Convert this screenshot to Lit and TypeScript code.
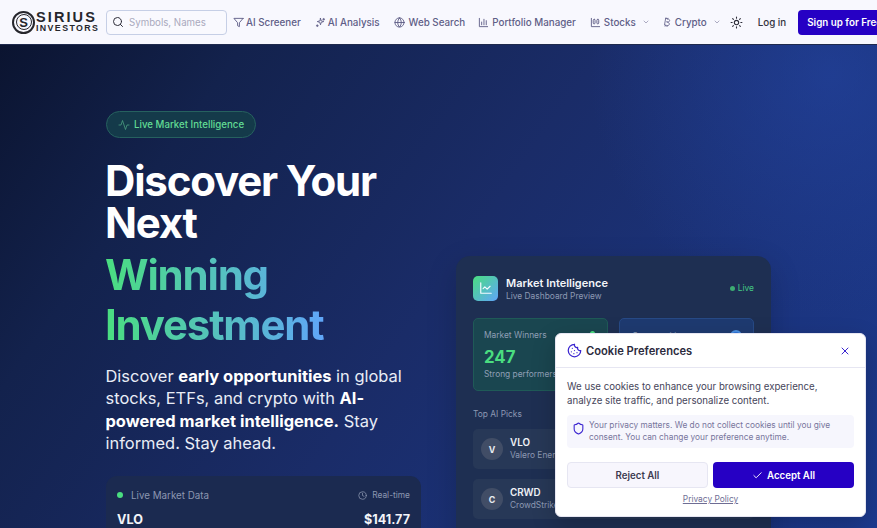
import { LitElement, html, css, svg } from "lit";
import { customElement } from "lit/decorators.js";

const ic = (content: unknown, size = 12, sw = 2) => html`<svg class="ic" width=${size} height=${size} viewBox="0 0 24 24" fill="none" stroke="currentColor" stroke-width=${sw} stroke-linecap="round" stroke-linejoin="round">${content}</svg>`;

const icons = {
  search: svg`<circle cx="11" cy="11" r="8"/><path d="m21 21-4.3-4.3"/>`,
  filter: svg`<path d="M22 3H2l8 9.46V19l4 2v-8.54L22 3z"/>`,
  spark: svg`<path d="M12 3l1.600 5.400L19 10l-5.400 1.600L12 17l-1.600-5.400L5 10l5.400-1.600z"/><path d="M19 3v4M17 5h4M5 17v4M3 19h4"/>`,
  globe: svg`<circle cx="12" cy="12" r="10"/><path d="M2 12h20"/><path d="M12 2a15 15 0 0 1 4 10 15 15 0 0 1-4 10 15 15 0 0 1-4-10 15 15 0 0 1 4-10z"/>`,
  bars: svg`<path d="M3 3v18h18"/><path d="M8 17v-6M13 17V5M18 17v-9"/>`,
  stocks: svg`<path d="M3 3v18h18"/><rect x="7" y="5" width="4" height="10" rx="2"/><rect x="15" y="5" width="4" height="10" rx="2"/>`,
  bitcoin: svg`<path d="M11.8 11.8c2.9.8 6-.3 6.5-2.6.5-2.4-1.5-4-4.3-4.7L8.8 3.2 6 19l5.4 1.3c3 .7 5.8-.4 6.3-2.9.5-2.4-2.6-4.8-5.9-5.6zM9.5 2l-.6 2M14 3l-.5 2M8 20l-.5 2M12.500 21l-.5 2"/>`,
  chev: svg`<path d="m6 9 6 6 6-6"/>`,
  sun: svg`<circle cx="12" cy="12" r="4"/><path d="M12 2v2M12 20v2M4.900 4.900l1.400 1.400M17.700 17.700l1.400 1.400M2 12h2M20 12h2M6.300 17.700l-1.400 1.400M19.100 4.900l-1.400 1.400"/>`,
  pulse: svg`<path d="M22 12h-4l-3 9L9 3l-3 9H2"/>`,
  clock: svg`<circle cx="12" cy="12" r="10"/><path d="M12 6v6l4 2"/>`,
  chart: svg`<path d="M3 3v18h18"/><path d="m19 9-5 5-4-4-3 3"/>`,
  cookie: svg`<path d="M12 2a10 10 0 1 0 10 10 4 4 0 0 1-5-5 4 4 0 0 1-5-5"/><path d="M8.500 8.500v.01M16 15.500v.01M12 12v.01M11 17v.01M7 14v.01"/>`,
  x: svg`<path d="M18 6 6 18M6 6l12 12"/>`,
  shield: svg`<path d="M20 13c0 5-3.500 7.500-7.660 8.950a1 1 0 0 1-.67-.01C7.500 20.500 4 18 4 13V6a1 1 0 0 1 1-1c2 0 4.500-1.200 6.240-2.720a1.170 1.170 0 0 1 1.520 0C14.510 3.810 17 5 19 5a1 1 0 0 1 1 1z"/>`,
  check: svg`<path d="M20 6 9 17l-5-5"/>`,
};

@customElement("app-root")
export class AppRoot extends LitElement {
  static styles = css`
    :host { display: block; position: relative; width: 877px; height: 528px; overflow: hidden; font-family: Inter, "Noto Sans", sans-serif; background: #0f1a3a; }
    .ic { display: block; flex: none; }
    nav { height: 45px; box-sizing: border-box; background: #f8f8fe; display: flex; align-items: center; padding-left: 12px; border-bottom: 1px solid #1f2a4d; white-space: nowrap; width: 920px; }
    .logo { display: flex; align-items: center; gap: 1px; width: 94px; flex: none; color: #26262c; }
    .mark { width: 23px; height: 23px; box-sizing: border-box; border: 2px solid #26262c; border-radius: 50%; padding: 1.500px; flex: none; }
    .mark span { display: flex; align-items: center; justify-content: center; width: 100%; height: 100%; box-sizing: border-box; border: 1.500px solid #26262c; border-radius: 50%; font: 700 13px "Liberation Sans", sans-serif; }
    .lw { display: flex; flex-direction: column; font-family: "Liberation Sans", sans-serif; font-weight: 700; }
    .lw b { font-size: 14.500px; line-height: 13px; letter-spacing: 2.100px; }
    .lw i { font-style: normal; font-size: 8.800px; line-height: 9px; letter-spacing: 1.400px; }
    .search { width: 121px; height: 25px; box-sizing: border-box; flex: none; border: 1px solid #c6cfe6; border-radius: 4px; display: flex; align-items: center; gap: 5px; padding-left: 5px; margin-right: 6px; color: #2e2e3a; font-size: 9.700px; background: #f9f9fe; }
    .search span { color: #a9a9bd; }
    .item { display: flex; align-items: center; gap: 3px; color: #5f5e87; font-size: 9.800px; font-weight: 500; margin-right: 14px; }
    .item.tight { gap: 2px; }
    .item.web { gap: 4px; margin-right: 13px; }
    .item.pf { margin-right: 14px; }
    .item .chev { margin-left: 3px; color: #8584a3; }
    .item.dd { margin-right: 12px; }
    .sun { color: #2e2e3a; margin: 0 15px 0 -3px; }
    .login { font-size: 9.800px; font-weight: 500; color: #33333d; margin-right: 12px; }
    .signup { height: 25px; border-radius: 4px; background: #2600c4; color: #fff; font-size: 9.800px; font-weight: 600; display: flex; align-items: center; padding: 0 9px; }

    .hero { height: 483px; box-sizing: border-box; padding: 66px 106px 0; display: grid; grid-template-columns: 315px 315px; gap: 35px; overflow: hidden;
      background: radial-gradient(circle 240px at 830px 30px, rgba(37,72,170,.5), transparent), linear-gradient(125deg, #0b1430 0%, #13224d 20%, #1a2c68 50%, #1c3a8f 100%); }
    .badge { display: inline-flex; align-items: center; gap: 4px; height: 27px; box-sizing: border-box; padding: 0 11px; border-radius: 14px; border: 1px solid #26615f; background: #143a4a; color: #62dc94; font-size: 9.700px; font-weight: 500; }
    .badge svg { color: #4ea483; }
    h1 { margin: 22px 0 0 -1px; font-size: 42px; line-height: 42px; font-weight: 700; letter-spacing: -1.200px; color: #fff; }
    .grad { display: block; line-height: 50.500px; margin-top: 5.500px; padding-right: 4px; background: linear-gradient(90deg, #4ade80, #60a5fa); -webkit-background-clip: text; background-clip: text; color: transparent; width: 218px; }
    .lead { margin: 14.500px 0 0 -0.500px; font-size: 16.450px; line-height: 22.400px; color: #e9edf6; }
    .lead b { font-weight: 700; color: #fff; }
    .market { margin-top: 21px; height: 120px; border-radius: 11px; background: #1b2a50; padding: 14px 11px; box-sizing: border-box; }
    .mh { display: flex; align-items: center; color: #8c97b0; font-size: 9.800px; }
    .mh .dot { width: 6px; height: 6px; border-radius: 50%; background: #4ade80; margin-right: 8px; }
    .mh .sp { flex: 1; }
    .mh .t { display: flex; align-items: center; gap: 5px; font-size: 8.400px; }
    .mr { display: flex; justify-content: space-between; margin-top: 11px; font-size: 12.600px; font-weight: 700; color: #f2f4f8; }

    .right { padding-top: 145px; }
    .dash { height: 300px; box-sizing: border-box; border-radius: 14px; background: #1e2f52; padding: 19px 17px 17px; box-shadow: 0 10px 30px rgba(0,0,0,.18); }
    .dh { display: flex; align-items: center; gap: 8px; height: 26px; }
    .logo2 { width: 25px; height: 25px; border-radius: 5px; background: linear-gradient(135deg, #4ade80, #60a5fa); color: #f4faff; display: flex; align-items: center; justify-content: center; }
    .dt { flex: 1; padding-top: 3px; }
    .dt b { display: block; color: #f3f5f9; font-size: 11px; line-height: 13px; font-weight: 600; }
    .dt span { display: block; color: #8d99b3; font-size: 8.400px; line-height: 13px; }
    .live { color: #43c983; font-size: 8.400px; display: flex; align-items: center; gap: 3px; }
    .live i { width: 5px; height: 5px; border-radius: 50%; background: #3dab72; }
    .stats { display: grid; grid-template-columns: 135px 135px; gap: 11px; margin-top: 17px; }
    .stat { height: 73px; box-sizing: border-box; border-radius: 5px; padding: 7px 10px; position: relative; }
    .s1 { background: #1a4650; border: 1px solid #1f5a57; }
    .s2 { background: #1e3a70; border: 1px solid #274a86; padding: 8px 12px; }
    .stat .l { color: #8f9fb5; font-size: 8.400px; line-height: 18px; }
    .stat .n { color: #4ade80; font-size: 16.800px; font-weight: 700; line-height: 22px; margin-top: 2px; }
    .stat .d { color: #8f9fb5; font-size: 8.400px; line-height: 12px; white-space: nowrap; }
    .stat .pip { position: absolute; border-radius: 50%; }
    .s1 .pip { background: #4ade80; right: 12px; top: 12px; width: 5px; height: 5px; }
    .s2 .pip { background: #2d6fd6; border: 2px solid #4a90e2; box-sizing: border-box; right: 11px; top: 11px; width: 12px; height: 12px; }
    .pl { color: #8d99b3; font-size: 8.400px; margin: 17px 0 9px; line-height: 12px; }
    .row { height: 40px; border-radius: 5px; background: #273857; display: flex; align-items: center; gap: 7px; padding-left: 8px; margin-bottom: 10px; }
    .av { width: 22px; height: 22px; border-radius: 50%; background: #414d66; color: #e8ebf1; font-size: 8.800px; font-weight: 700; display: flex; align-items: center; justify-content: center; }
    .row b { display: block; color: #eef1f6; font-size: 9.800px; line-height: 13px; font-weight: 600; }
    .row span { display: block; color: #8d99b3; font-size: 8.400px; line-height: 13px; white-space: nowrap; }

    .cookie { position: absolute; left: 555px; top: 333px; width: 311px; height: 184px; box-sizing: border-box; background: #fff; border-radius: 6px; border: 1px solid #e6e6f2; box-shadow: 0 8px 24px rgba(0,0,0,.2); color: #44435a; }
    .ch { height: 33px; border-bottom: 1px solid #e6e6f2; display: flex; align-items: center; gap: 4px; padding: 0 14px 0 11px; }
    .ch svg:first-child { color: #3a24d0; }
    .ch strong { flex: 1; font-size: 11.200px; font-weight: 600; color: #2b2a3c; }
    .ch .close { color: #5f5e87; }
    .cb { padding: 12px 11px 0; }
    .cb p { margin: 0; font-size: 9.700px; line-height: 14px; color: #46455a; }
    .note { display: flex; gap: 4px; margin-top: 7px; height: 33px; box-sizing: border-box; padding: 5px 5px; background: #f6f6fd; border-radius: 4px; font-size: 8.300px; line-height: 11.500px; color: #76759c; }
    .note svg { color: #3a24d0; margin-top: 2px; }
    .btns { display: grid; grid-template-columns: 141px 141px; gap: 5px; margin-top: 14px; }
    .btn { height: 26px; box-sizing: border-box; border-radius: 4px; display: flex; align-items: center; justify-content: center; gap: 4px; font-size: 9.700px; font-weight: 600; }
    .rej { background: #f7f6fd; border: 1px solid #e6e6f2; color: #3c3b50; }
    .acc { background: #2600c4; color: #fff; }
    .pp { text-align: center; font-size: 8.400px; line-height: 12px; margin-top: 5px; color: #6e6d94; text-decoration: underline; }
  `;

  render() {
    return html`
      <nav>
        <div class="logo">
          <div class="mark"><span>S</span></div>
          <div class="lw"><b>SIRIUS</b><i>INVESTORS</i></div>
        </div>
        <div class="search">${ic(icons.search, 12)}<span>Symbols, Names</span></div>
        <div class="item tight">${ic(icons.filter, 11)}AI Screener</div>
        <div class="item tight">${ic(icons.spark, 11)}AI Analysis</div>
        <div class="item web">${ic(icons.globe, 11)}Web Search</div>
        <div class="item pf">${ic(icons.bars, 11)}Portfolio Manager</div>
        <div class="item dd">${ic(icons.stocks, 11)}Stocks<span class="chev">${ic(icons.chev, 8)}</span></div>
        <div class="item dd">${ic(icons.bitcoin, 10)}Crypto<span class="chev">${ic(icons.chev, 8)}</span></div>
        <div class="sun">${ic(icons.sun, 13)}</div>
        <div class="login">Log in</div>
        <div class="signup">Sign up for Free</div>
      </nav>
      <section class="hero">
        <div>
          <div class="badge">${ic(icons.pulse, 12, 1.5)}Live Market Intelligence</div>
          <h1>Discover Your Next<span class="grad">Winning Investment</span></h1>
          <p class="lead">Discover <b>early opportunities</b> in global stocks, ETFs, and crypto with <b>AI-powered market intelligence.</b> Stay informed. Stay ahead.</p>
          <div class="market">
            <div class="mh"><span class="dot"></span>Live Market Data<span class="sp"></span><span class="t">${ic(icons.clock, 9)}Real-time</span></div>
            <div class="mr"><span>VLO</span><span>$141.77</span></div>
          </div>
        </div>
        <div class="right">
          <div class="dash">
            <div class="dh">
              <div class="logo2">${ic(icons.chart, 14)}</div>
              <div class="dt"><b>Market Intelligence</b><span>Live Dashboard Preview</span></div>
              <div class="live"><i></i>Live</div>
            </div>
            <div class="stats">
              <div class="stat s1"><div class="l">Market Winners</div><div class="n">247</div><div class="d">Strong performers</div><span class="pip"></span></div>
              <div class="stat s2"><div class="l">Opportunities</div><span class="pip"></span></div>
            </div>
            <div class="pl">Top AI Picks</div>
            <div class="row"><div class="av">V</div><div><b>VLO</b><span>Valero Energy</span></div></div>
            <div class="row"><div class="av">C</div><div><b>CRWD</b><span>CrowdStrike</span></div></div>
          </div>
        </div>
      </section>
      <aside class="cookie">
        <div class="ch">${ic(icons.cookie, 15)}<strong>Cookie Preferences</strong><span class="close">${ic(icons.x, 12)}</span></div>
        <div class="cb">
          <p>We use cookies to enhance your browsing experience, analyze site traffic, and personalize content.</p>
          <div class="note">${ic(icons.shield, 13)}<span>Your privacy matters. We do not collect cookies until you give consent. You can change your preference anytime.</span></div>
          <div class="btns"><div class="btn rej">Reject All</div><div class="btn acc">${ic(icons.check, 11)}Accept All</div></div>
          <div class="pp">Privacy Policy</div>
        </div>
      </aside>
    `;
  }
}
